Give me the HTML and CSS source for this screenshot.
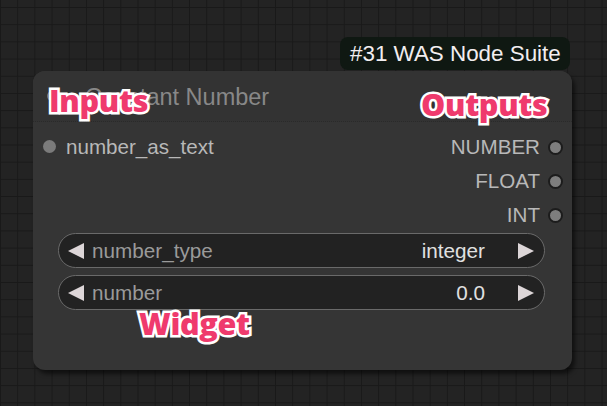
FILE: index.html
```html
<!DOCTYPE html>
<html>
<head>
<meta charset="utf-8">
<link rel="stylesheet" href="styles.css">
</head>
<body>
<div class="canvas">
  <div class="badge">#31 WAS Node Suite</div>
  <div class="node">
    <div class="title">
      <span class="collapse"></span>
      <span class="title-text">Constant Number</span>
    </div>
    <div class="slots">
      <div class="inputs">
        <div class="slot in"><span class="dot"></span><span>number_as_text</span></div>
      </div>
      <div class="outputs">
        <div class="slot out"><span>NUMBER</span><span class="dot"></span></div>
        <div class="slot out"><span>FLOAT</span><span class="dot"></span></div>
        <div class="slot out"><span>INT</span><span class="dot"></span></div>
      </div>
    </div>
    <div class="widgets">
      <div class="widget">
        <span class="arrow left"></span>
        <span class="wlabel">number_type</span>
        <span class="wvalue">integer</span>
        <span class="arrow right"></span>
      </div>
      <div class="widget">
        <span class="arrow left"></span>
        <span class="wlabel">number</span>
        <span class="wvalue">0.0</span>
        <span class="arrow right"></span>
      </div>
    </div>
  </div>
  <div class="note note-inputs">Inputs</div>
  <div class="note note-outputs">Outputs</div>
  <div class="note note-widget">Widget</div>
</div>
</body>
</html>
```

FILE: styles.css
```css
html, body {
  margin: 0;
  padding: 0;
  width: 607px;
  height: 406px;
  overflow: hidden;
}
body {
  background-color: #232323;
  background-image:
    linear-gradient(to right, #191919 1px, transparent 1px),
    linear-gradient(to bottom, #191919 1px, transparent 1px);
  background-size: 17.2px 17.2px;
  background-position: 0px 7px;
  font-family: "Liberation Sans", Arial, sans-serif;
}
.canvas {
  position: relative;
  width: 607px;
  height: 406px;
}
.badge {
  position: absolute;
  left: 340px;
  top: 37px;
  width: 230px;
  height: 33px;
  box-sizing: border-box;
  padding-left: 10px;
  background: #0f1812;
  border-radius: 8px;
  color: #f2eef0;
  font-size: 22.4px;
  line-height: 33px;
  white-space: nowrap;
}
.node {
  position: absolute;
  left: 33px;
  top: 71px;
  width: 539px;
  height: 299px;
  background: #353535;
  border-radius: 12px;
  box-shadow: 3px 4px 4px rgba(0, 0, 0, 0.55);
  display: flex;
  flex-direction: column;
}
.title {
  height: 50px;
  border-bottom: 1px dotted #2a2a2a;
  display: flex;
  align-items: center;
  padding-left: 14px;
  gap: 28px;
  background: #333333;
  border-radius: 12px 12px 0 0;
}
.collapse {
  width: 10px;
  height: 10px;
  border-radius: 50%;
  background: #777;
}
.title-text {
  color: #888888;
  font-size: 23.5px;
  margin-top: 2px;
}
.slots {
  display: flex;
  justify-content: space-between;
  padding-top: 8px;
}
.slot {
  height: 34px;
  display: flex;
  align-items: center;
  color: #b8b8b8;
  font-size: 20.6px;
}
.slot.in {
  padding-left: 10px;
  gap: 10px;
}
.slot.out {
  justify-content: flex-end;
  padding-right: 9px;
  gap: 8px;
}
.dot {
  width: 13px;
  height: 13px;
  border-radius: 50%;
  background: #7b7b7b;
  box-sizing: border-box;
  margin-top: -2px;
}
.slot.out .dot {
  width: 15px;
  height: 15px;
  border: 2px solid #1c1c1c;
  background: #7e7e7e;
  margin-top: 0;
}
.widgets {
  display: flex;
  flex-direction: column;
  gap: 7px;
  padding: 1px 27px 0 25px;
}
.widget {
  height: 35px;
  box-sizing: border-box;
  border: 1.5px solid #6a6a6a;
  border-radius: 18px;
  background: #222222;
  display: flex;
  align-items: center;
  padding: 0 10px 0 9px;
  font-size: 20.7px;
}
.arrow {
  width: 0;
  height: 0;
  border-top: 8px solid transparent;
  border-bottom: 8px solid transparent;
}
.arrow.left {
  border-right: 16px solid #ddd6d8;
}
.arrow.right {
  border-left: 16px solid #ddd6d8;
}
.wlabel {
  color: #9a9a9a;
  margin-left: 8px;
  flex: 1;
}
.wvalue {
  color: #e0e0e0;
  margin-right: 33px;
}
.note {
  position: absolute;
  font-family: "Open Sans", "Noto Sans", sans-serif;
  font-weight: 800;
  font-size: 30.5px;
  color: #ef3a6d;
  -webkit-text-stroke: 5px #ffffff;
  paint-order: stroke fill;
  line-height: 34px;
  letter-spacing: -0.3px;
}
.note-inputs {
  left: 49px;
  top: 83px;
}
.note-outputs {
  left: 421px;
  top: 87px;
}
.note-widget {
  left: 139px;
  top: 306px;
}
```
